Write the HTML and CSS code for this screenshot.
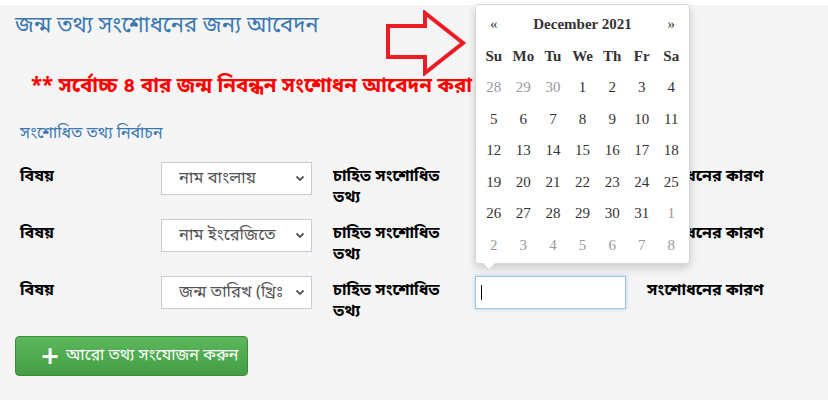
FILE: index.html
```html
<!DOCTYPE html>
<html lang="bn">
<head>
    <meta charset="UTF-8">
    <meta name="viewport" content="width=device-width, initial-scale=1.0">
    <title>জন্ম তথ্য সংশোধনের জন্য আবেদন</title>
    <link rel="stylesheet" href="styles.css">
</head>
<body>
    <div class="page">
        <h1 class="title">জন্ম তথ্য সংশোধনের জন্য আবেদন</h1>

        <svg class="arrow" width="82" height="66" viewBox="0 0 82 66">
            <polygon points="3,16 40,16 40,3 78,33 40,63 40,47 3,47" fill="none" stroke="#ed1c24" stroke-width="4" stroke-linejoin="miter"/>
        </svg>

        <p class="warning">** সর্বোচ্চ ৪ বার জন্ম নিবন্ধন সংশোধন আবেদন করা যাবে</p>

        <h2 class="section">সংশোধিত তথ্য নির্বাচন</h2>

        <div class="rows">
            <div class="row">
                <label class="lbl">বিষয়</label>
                <div class="select">
                    <span>নাম বাংলায়</span>
                    <svg width="10" height="7" viewBox="0 0 10 7"><path d="M1.5 1.5 L5 5 L8.5 1.5" fill="none" stroke="#555" stroke-width="1.8"/></svg>
                </div>
                <label class="lbl wide">চাহিত সংশোধিত তথ্য</label>
                <div class="input"></div>
                <label class="lbl">সংশোধনের কারণ</label>
            </div>
            <div class="row">
                <label class="lbl">বিষয়</label>
                <div class="select">
                    <span>নাম ইংরেজিতে</span>
                    <svg width="10" height="7" viewBox="0 0 10 7"><path d="M1.5 1.5 L5 5 L8.5 1.5" fill="none" stroke="#555" stroke-width="1.8"/></svg>
                </div>
                <label class="lbl wide">চাহিত সংশোধিত তথ্য</label>
                <div class="input"></div>
                <label class="lbl">সংশোধনের কারণ</label>
            </div>
            <div class="row">
                <label class="lbl">বিষয়</label>
                <div class="select">
                    <span>জন্ম তারিখ (খ্রিঃ</span>
                    <svg width="10" height="7" viewBox="0 0 10 7"><path d="M1.5 1.5 L5 5 L8.5 1.5" fill="none" stroke="#555" stroke-width="1.8"/></svg>
                </div>
                <label class="lbl wide">চাহিত সংশোধিত তথ্য</label>
                <div class="input focus"><span class="caret"></span></div>
                <label class="lbl">সংশোধনের কারণ</label>
            </div>
        </div>

        <button class="add-btn"><span class="plus">+</span> আরো তথ্য সংযোজন করুন</button>

        <div class="datepicker">
            <table>
                <thead>
                    <tr class="head">
                        <th class="nav">«</th>
                        <th colspan="5" class="month">December 2021</th>
                        <th class="nav">»</th>
                    </tr>
                    <tr class="dow">
                        <th>Su</th><th>Mo</th><th>Tu</th><th>We</th><th>Th</th><th>Fr</th><th>Sa</th>
                    </tr>
                </thead>
                <tbody>
                    <tr><td class="old">28</td><td class="old">29</td><td class="old">30</td><td>1</td><td>2</td><td>3</td><td>4</td></tr>
                    <tr><td>5</td><td>6</td><td>7</td><td>8</td><td>9</td><td>10</td><td>11</td></tr>
                    <tr><td>12</td><td>13</td><td>14</td><td>15</td><td>16</td><td>17</td><td>18</td></tr>
                    <tr><td>19</td><td>20</td><td>21</td><td>22</td><td>23</td><td>24</td><td>25</td></tr>
                    <tr><td>26</td><td>27</td><td>28</td><td>29</td><td>30</td><td>31</td><td class="old">1</td></tr>
                    <tr><td class="old">2</td><td class="old">3</td><td class="old">4</td><td class="old">5</td><td class="old">6</td><td class="old">7</td><td class="old">8</td></tr>
                </tbody>
            </table>
        </div>
    </div>
</body>
</html>
```

FILE: styles.css
```css
body {
    margin: 0;
    padding: 0;
    background-color: #ffffff;
    font-family: "Noto Sans Bengali", "Lohit Bengali", "Noto Sans", sans-serif;
    overflow: hidden;
}

.page {
    position: relative;
    margin-top: 5px;
    min-height: 395px;
    background-color: #f5f5f5;
    padding: 8px 15px 0 15px;
    box-sizing: border-box;
}

.title {
    margin: 0;
    font-size: 22px;
    font-weight: normal;
    color: #3a78b2;
    line-height: 28px;
    white-space: nowrap;
}

.arrow {
    position: absolute;
    left: 385px;
    top: 5px;
}

.warning {
    margin: 34px 0 0 16px;
    font-size: 20.5px;
    font-weight: bold;
    color: #ff0000;
    line-height: 24px;
    white-space: nowrap;
}

.section {
    margin: 24px 0 0 5px;
    font-size: 16px;
    font-weight: normal;
    color: #3a78b2;
    line-height: 22px;
}

.rows {
    margin-top: 17px;
    display: flex;
    flex-direction: column;
    gap: 24px;
}

.row {
    display: flex;
    align-items: flex-start;
    height: 33px;
}

.lbl {
    font-size: 16px;
    font-weight: bold;
    color: #000;
    line-height: 21px;
    padding-top: 5px;
    white-space: nowrap;
}

.row .lbl:first-child {
    width: 141px;
    padding-left: 5px;
}

.lbl.wide {
    width: 124px;
    margin-left: 21px;
    margin-right: 18px;
    white-space: normal;
}

.select {
    width: 151px;
    height: 33px;
    box-sizing: border-box;
    border: 1px solid #c5ccd6;
    background-color: #ffffff;
    display: flex;
    align-items: center;
    justify-content: space-between;
    padding: 0 6px 0 17px;
    font-size: 16.5px;
    color: #555;
}

.select span {
    white-space: nowrap;
    overflow: hidden;
}

.input {
    width: 151px;
    height: 33px;
    box-sizing: border-box;
    border: 1px solid #c5ccd6;
    background-color: #ffffff;
    margin-right: 21px;
    display: flex;
    align-items: center;
    padding-left: 5px;
}

.input.focus {
    border-color: #9ec3e6;
    box-shadow: 0 0 4px rgba(102, 175, 233, 0.5);
}

.caret {
    width: 1px;
    height: 15px;
    background-color: #000;
}

.add-btn {
    margin-top: 27px;
    width: 233px;
    height: 40px;
    border: 1px solid #3d8b3d;
    border-radius: 4px;
    background: linear-gradient(to bottom, #5cb85c, #449d44);
    color: #ffffff;
    font-family: inherit;
    font-size: 16px;
    text-align: left;
    padding: 0 0 0 24px;
    display: flex;
    align-items: center;
    gap: 6px;
}

.plus {
    font-size: 24px;
    font-weight: bold;
    font-family: "DejaVu Sans", sans-serif;
    line-height: 1;
}

.datepicker {
    position: absolute;
    left: 475px;
    top: -1px;
    width: 215px;
    height: 260px;
    box-sizing: border-box;
    background-color: #ffffff;
    border: 1px solid #d6d6d6;
    border-radius: 4px;
    box-shadow: 0 4px 10px rgba(0, 0, 0, 0.18);
    padding: 4px 3px;
    font-family: "Liberation Serif", serif;
    font-size: 15px;
    color: #333;
}

.datepicker::before {
    content: "";
    position: absolute;
    left: 6px;
    bottom: -7px;
    border-left: 7px solid transparent;
    border-right: 7px solid transparent;
    border-top: 7px solid #d6d6d6;
}

.datepicker::after {
    content: "";
    position: absolute;
    left: 7px;
    bottom: -6px;
    border-left: 6px solid transparent;
    border-right: 6px solid transparent;
    border-top: 6px solid #ffffff;
}

.datepicker table {
    border-collapse: collapse;
    width: 100%;
}

.datepicker th,
.datepicker td {
    height: 31.5px;
    padding: 0;
    text-align: center;
    width: 30px;
}

.datepicker th {
    font-weight: bold;
}

.datepicker .nav {
    font-weight: normal;
}

.datepicker td.old {
    color: #999;
}
```
